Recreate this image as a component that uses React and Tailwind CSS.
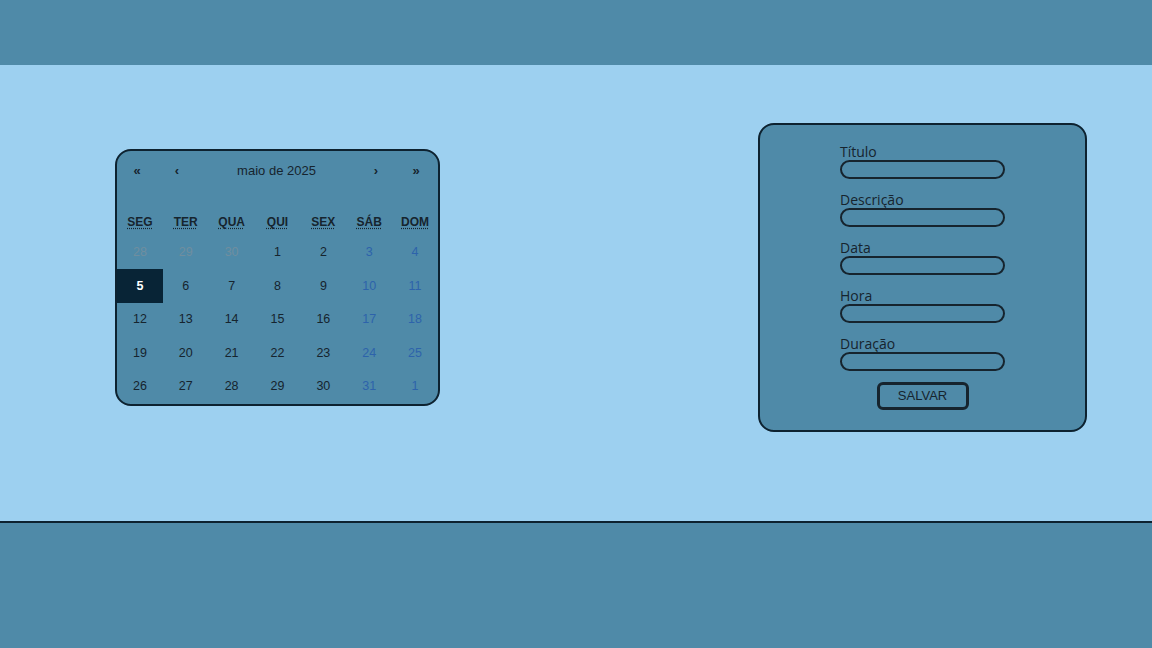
import React from 'react'

const weekdays = ['SEG', 'TER', 'QUA', 'QUI', 'SEX', 'SÁB', 'DOM']

// May 2025, week starting on Monday
const days = [
  [28, 29, 30, 1, 2, 3, 4],
  [5, 6, 7, 8, 9, 10, 11],
  [12, 13, 14, 15, 16, 17, 18],
  [19, 20, 21, 22, 23, 24, 25],
  [26, 27, 28, 29, 30, 31, 1],
]

function Calendar() {
  return (
    <div className="w-[325px] rounded-[16px] border-2 border-[#0d2230] bg-[#4f8aa8] pb-[1px] font-['Liberation_Sans',Arial,sans-serif] text-[#16242e]">
      {/* Navigation */}
      <div className="flex h-[40px] items-center text-[13px]">
        <button className="w-10 text-center font-bold">«</button>
        <button className="w-10 text-center font-bold">‹</button>
        <span className="flex-1 text-center">maio de 2025</span>
        <button className="w-10 text-center font-bold">›</button>
        <button className="mr-[2px] w-10 text-center font-bold">»</button>
      </div>

      {/* Weekdays */}
      <div className="mt-[19px] grid h-[24px] grid-cols-7 items-center text-[12px] font-bold">
        {weekdays.map((d) => (
          <abbr key={d} className="text-center underline decoration-dotted underline-offset-2">
            {d}
          </abbr>
        ))}
      </div>

      {/* Days */}
      <div className="mt-[2px] grid grid-cols-7 text-[12.5px]">
        {days.map((week, w) =>
          week.map((d, i) => {
            const outside = (w === 0 && i < 3) || (w === 4 && i === 6)
            const weekend = i >= 5
            const selected = w === 1 && i === 0
            let color = 'text-[#16242e]'
            if (weekend) color = 'text-[#2d63ab]'
            if (outside && !weekend) color = 'text-[#6f8e9f]'
            if (selected) color = 'bg-[#082436] text-white font-bold'
            return (
              <div key={`${w}-${i}`} className={`flex h-[33.5px] items-center justify-center ${color}`}>
                {d}
              </div>
            )
          })
        )}
      </div>
    </div>
  )
}

function Field({ label }) {
  return (
    <div className="flex flex-col">
      <label className="text-[14px] leading-[17px] text-[#16242e]">{label}</label>
      <input
        type="text"
        className="h-[19px] w-[165px] rounded-full border-2 border-[#16242e] bg-transparent outline-none"
      />
    </div>
  )
}

function EventForm() {
  return (
    <div className="flex h-[309px] w-[329px] flex-col items-center rounded-[16px] border-2 border-[#0d2230] bg-[#4f8aa8] pt-[18px] font-['Open_Sans','Noto_Sans',sans-serif]">
      <div className="flex flex-col gap-[12px]">
        <Field label="Título" />
        <Field label="Descrição" />
        <Field label="Data" />
        <Field label="Hora" />
        <Field label="Duração" />
      </div>
      <button className="mt-[11px] h-[28px] w-[92px] rounded-[6px] border-[3px] border-[#16242e] font-['Liberation_Sans',Arial,sans-serif] text-[13px] text-[#16242e]">
        SALVAR
      </button>
    </div>
  )
}

export default function App() {
  return (
    <div className="flex h-[648px] w-full flex-col bg-[#4f8aa8]">
      <header className="h-[65px] shrink-0 bg-[#4f8aa8]" />
      <main className="flex h-[456px] items-center justify-between bg-[#9dd0f0] pb-[31px] pl-[115px] pr-[65px]">
        <Calendar />
        <EventForm />
      </main>
      <footer className="flex-1 border-t-2 border-[#0d2230] bg-[#4f8aa8]" />
    </div>
  )
}
